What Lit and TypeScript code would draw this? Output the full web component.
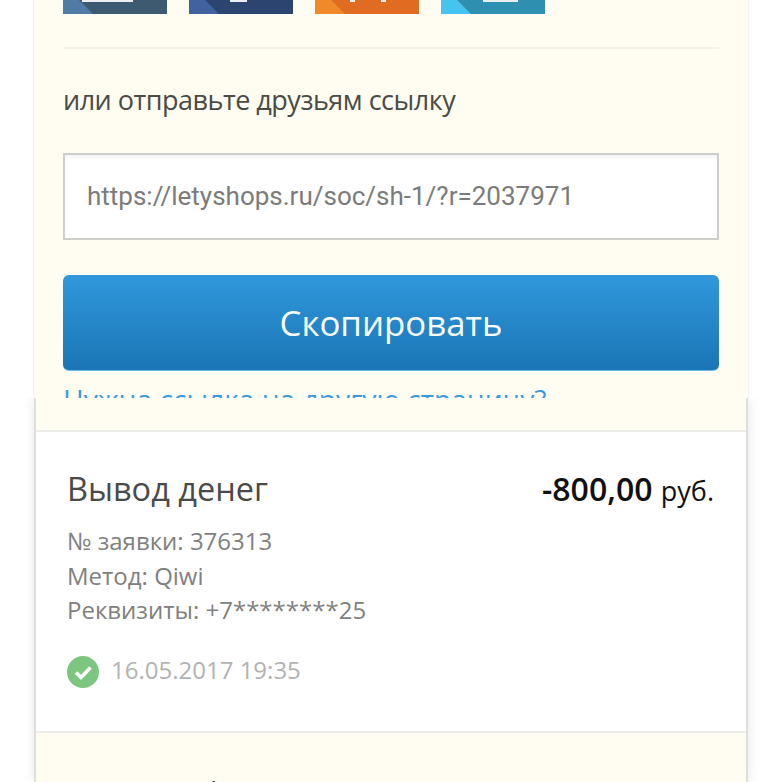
import { LitElement, html, css, svg } from "lit";
import { customElement } from "lit/decorators.js";

const tiles = [
  { a: "#4f7ba5", b: "#3d5a70", marks: [[19, 51]] },
  { a: "#41629f", b: "#2c4470", marks: [[41, 17]] },
  { a: "#f08a28", b: "#e06c22", marks: [[35, 5], [66, 5]] },
  { a: "#44c4ef", b: "#2e8fb0", marks: [[42, 35]] },
];

@customElement("app-root")
export class AppRoot extends LitElement {
  static styles = css`
    :host { display: block; width: 782px; height: 782px; overflow: hidden; background: #fff; font-family: "Open Sans", "Noto Sans", sans-serif; }
    .top { height: 398px; overflow: hidden; }
    .share { margin: 0 34px; height: 398px; box-sizing: border-box; padding: 0 29px; background: #fffdf2; box-shadow: 0 0 0 1px #f4f4f2; }
    .tiles { display: flex; gap: 22px; height: 14px; }
    .tile { display: block; width: 104px; height: 14px; }
    .rule { height: 2px; margin-top: 33px; background: #f1f1ec; }
    .lead { margin: 32px 0 0; font-size: 27px; line-height: 37px; letter-spacing: -0.5px; color: #4a4a46; }
    .field { box-sizing: border-box; height: 87px; margin-top: 35px; padding: 0 22px 2px; display: flex; align-items: center; background: #fff; border: 2px solid #cdcdc9; box-shadow: inset 0 4px 4px -2px #f0f0f0; font: 26px/1 Roboto, sans-serif; color: #7b7b7b; }
    .copy { display: flex; align-items: center; justify-content: center; height: 96px; margin-top: 35px; border-radius: 6px; background: linear-gradient(#3098dc, #1a75b5); border-bottom: 1px solid #6cbbe8; box-sizing: border-box; font-size: 34.8px; color: #f7fbfe; }
    .other { display: block; margin-top: 10px; font-size: 28.2px; line-height: 37px; color: #3a9ad9; white-space: nowrap; }
    .lower { height: 384px; padding: 0 34px; overflow: hidden; }
    .card { height: 384px; background: #fffdf2; border: solid #dededa; border-width: 0 2px; box-sizing: border-box; box-shadow: 0 0 12px rgba(0, 0, 0, 0.1); }
    .spacer { height: 32px; border-bottom: 2px solid #ecece8; }
    .op { box-sizing: border-box; height: 301px; padding: 36px 32px 0 31px; background: #fff; border-bottom: 2px solid #ecece8; }
    .head { display: flex; justify-content: space-between; align-items: baseline; }
    .title { font-size: 32.5px; line-height: 42px; color: #4a4a4a; }
    .sum { font-size: 32px; font-weight: 600; line-height: 42px; color: #111; }
    .sum small { font-size: 27px; font-weight: 400; }
    .meta { margin-top: 12px; font-size: 24px; line-height: 34.5px; color: #808080; }
    .date { display: flex; align-items: center; gap: 12px; margin-top: 28px; font-size: 24px; color: #b2b2b2; }
    .date span { position: relative; top: -3px; }
    .check { width: 32px; height: 32px; flex: none; }
    .next { padding: 40px 32px 0 31px; display: flex; justify-content: space-between; align-items: baseline; }
  `;

  render() {
    return html`
      <div class="top">
        <section class="share">
          <div class="tiles">
            ${tiles.map(t => html`<svg class="tile" viewBox="0 0 104 14">
              <rect width="104" height="14" fill=${t.a}></rect>
              <polygon points="16,0 104,0 104,14 30,14" fill=${t.b}></polygon>
              ${t.marks.map(m => svg`<rect x=${m[0]} y="0" width=${m[1]} height="2" fill="#eceff2"></rect>`)}
            </svg>`)}
          </div>
          <div class="rule"></div>
          <p class="lead">или отправьте друзьям ссылку</p>
          <div class="field">https://letyshops.ru/soc/sh-1/?r=2037971</div>
          <div class="copy">Скопировать</div>
          <a class="other">Нужна ссылка на другую страницу?</a>
        </section>
      </div>
      <div class="lower">
        <section class="card">
          <div class="spacer"></div>
          <div class="op">
            <div class="head">
              <span class="title">Вывод денег</span>
              <span class="sum">-800,00 <small>руб.</small></span>
            </div>
            <div class="meta">№ заявки: 376313<br />Метод: Qiwi<br />Реквизиты: +7********25</div>
            <div class="date">
              <svg class="check" viewBox="0 0 32 32">
                <circle cx="16" cy="16" r="16" fill="#7cc67f"></circle>
                <path d="M9 16.5l5 5 9.5-10" fill="none" stroke="#fff" stroke-width="3.6"></path>
              </svg>
              <span>16.05.2017 19:35</span>
            </div>
          </div>
          <div class="next">
            <span class="title">Сумма с ф</span>
            <span class="sum">0,00 <small>руб.</small></span>
          </div>
        </section>
      </div>
    `;
  }
}
